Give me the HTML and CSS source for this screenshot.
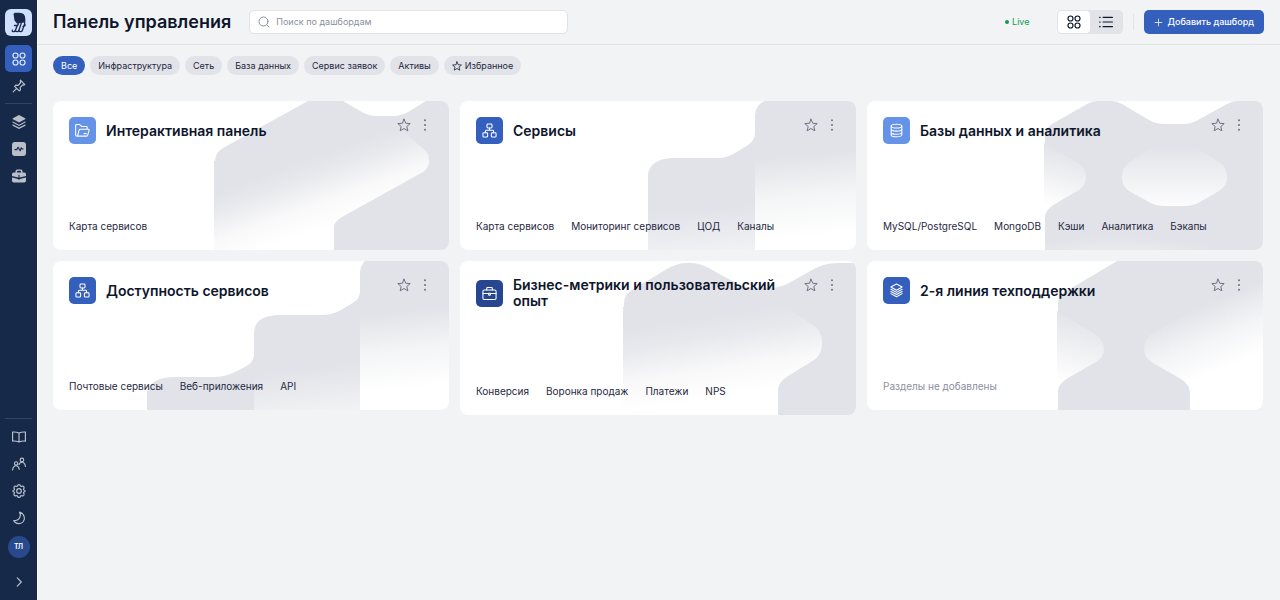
FILE: index.html
```html
<!DOCTYPE html>
<html lang="ru">
<head>
    <meta charset="UTF-8">
    <meta name="viewport" content="width=device-width, initial-scale=1.0">
    <title>Панель управления</title>
    <link rel="stylesheet" href="styles.css">
</head>
<body>
    <svg class="sprite" aria-hidden="true">
        <symbol id="i-grid" viewBox="0 0 24 24"><circle cx="6" cy="6" r="4.300"/><circle cx="18" cy="6" r="4.300"/><circle cx="6" cy="18" r="4.300"/><circle cx="18" cy="18" r="4.300"/></symbol>
        <symbol id="i-star" viewBox="0 0 24 24"><path d="M12 2l3 7 7.600.6-5.800 5 1.800 7.400-6.600-4-6.600 4 1.800-7.400-5.800-5L9 9z"/></symbol>
        <symbol id="i-dots" viewBox="0 0 24 24"><g fill="currentColor" stroke="none"><circle cx="12" cy="4" r="1.700"/><circle cx="12" cy="12" r="1.700"/><circle cx="12" cy="20" r="1.700"/></g></symbol>
        <symbol id="i-tree" viewBox="0 0 24 24"><rect x="8" y="1.500" width="8" height="6.500" rx="1.500"/><rect x="1.500" y="15.500" width="7.500" height="7" rx="1.500"/><rect x="15" y="15.500" width="7.500" height="7" rx="1.500"/><path d="M12 8v3.500M5.500 15.500V13q0-1.500 1.500-1.500h10q1.500 0 1.500 1.500v2.500"/></symbol>
        <symbol id="i-folder" viewBox="0 0 24 24"><path d="M3 21q-2 0-2-2V4q0-1.500 1.500-1.500h5l3 3H18q1.500 0 1.500 1.500v3M3 21q1 0 1.500-2L6.500 11.500q.4-1.500 2-1.500H21.500q1.500 0 1 1.500l-2 7.500q-.5 2-2 2zM14.500 17h3.500"/></symbol>
        <symbol id="i-db" viewBox="0 0 24 24"><ellipse cx="12" cy="5" rx="8.500" ry="3"/><path d="M3.500 5v14c0 4 17 4 17 0V5M3.500 10c0 4 17 4 17 0M3.500 15c0 4 17 4 17 0M7 12v.5M7 17v.5"/></symbol>
        <symbol id="i-case" viewBox="0 0 24 24"><rect x="1.500" y="6.500" width="21" height="15" rx="2"/><path d="M7.500 6.500V4q0-1.500 1.500-1.500h6q1.500 0 1.500 1.500v2.500M1.500 12h9M13.500 12h9M10.500 11.500h3v2.500L12 15l-1.500-1z"/></symbol>
        <symbol id="i-layers" viewBox="0 0 24 24"><path d="M12 1.500l9 5-9 5-9-5zM3 10l9 5 9-5M3 13.500l9 5 9-5M3 17l9 5 9-5"/></symbol>
    </svg>

    <div class="app">
        <aside class="sidebar">
            <a class="logo" href="#" aria-label="Главная">
                <svg viewBox="0 0 27 27">
                    <path fill="#17294d" d="M8.500 5Q9 3.800 10.500 3.800H14.500Q20.300 3.800 20.300 10V13.500H19L12 14.500 9.500 11.500z"/>
                    <path fill="none" stroke="#17294d" stroke-width="1.300" stroke-linecap="round" d="M12.500 13.500q1.500 1.500 0 3H9.500M12.500 16L10.500 21q-.5 1.700-1.900 1.700-1.600 0-1.300-1.500M16 13.500q.5 1-.3 2.500L14 21q-.5 1.700-1.900 1.700-1.300 0-1.300-1M19.500 13.500q.5 1-.3 2.500L17.500 21q-.5 1.700-1.900 1.700-1.300 0-1.300-1M18 17.500q1.500 0 2.300-1.500"/>
                </svg>
            </a>
            <nav class="nav" aria-label="Основное меню">
                <a class="nav-item active" href="#" aria-label="Дашборды"><svg class="icon"><use href="#i-grid"/></svg></a>
                <a class="nav-item" href="#" aria-label="Закреплённые"><svg class="icon" viewBox="0 0 24 24"><path d="M14.500 2l7.500 7.500-2 1-1.500-.5-4.500 4.500.5 4-2 2L4.500 12.500l2-2 4 .5L15 6l-.7-2zM8 16l-6 6"/></svg></a>
                <hr>
                <a class="nav-item solid" href="#" aria-label="Слои"><svg class="icon" viewBox="0 0 24 24"><path d="M12 0l10.500 5.500q1 .8 0 1.600L12 13 1.500 7.100q-1-.8 0-1.600z"/><path d="M1 10.500l11 6 11-6V13L12 19 1 13zM1 16l11 5.500L23 16v2.500L12 24 1 18.500z"/></svg></a>
                <a class="nav-item solid" href="#" aria-label="Мониторинг"><svg class="icon" viewBox="0 0 24 24"><rect width="24" height="24" rx="5"/><path class="cut" d="M5 13h3l2.500-4 3.500 6 2-5 1.500 2H19"/></svg></a>
                <a class="nav-item solid" href="#" aria-label="Сервисы"><svg class="icon" viewBox="0 0 24 24"><path fill-rule="evenodd" d="M6 6V4q0-3 3-3h6q3 0 3 3v2h3q3 0 3 3v3l-9 2H9l-9-2V9q0-3 3-3zM8.500 6h7V4.500Q15.500 3 14 3h-4Q8.500 3 8.500 4.500zM0 14.500l9 2q3 3 6 0l9-2V20q0 3-3 3H3q-3 0-3-3z"/><path class="cut" d="M12 11v2"/></svg></a>
            </nav>
            <nav class="nav nav-bottom" aria-label="Дополнительно">
                <hr>
                <a class="nav-item" href="#" aria-label="Документация"><svg class="icon" viewBox="0 0 24 24"><path d="M12 5q-5-2-11-1.500V19q6-.5 11 1.500 5-2 11-1.500V3.500Q17 3 12 5zv15"/></svg></a>
                <a class="nav-item" href="#" aria-label="Пользователи"><svg class="icon" viewBox="0 0 24 24"><circle cx="7" cy="11" r="2.800"/><path d="M1 22q1-7 6-7 4 0 5.500 6"/><circle cx="17" cy="5" r="3"/><path d="M12 13q1-4 5-4 5 0 6 7"/></svg></a>
                <a class="nav-item" href="#" aria-label="Настройки"><svg class="icon" viewBox="0 0 24 24"><path d="M9.500 3Q10 1 12 1t2.500 2q.5 1.500 2 1 2.500-1 3.800.8 1.200 2-.3 3.500-.8 1 .5 2Q22.500 11 22.500 12t-2 1.800q-1.300 1-.5 2 1.500 1.500.3 3.500-1.300 1.800-3.800.8-1.500-.5-2 1Q14 23 12 23t-2.500-2q-.5-1.500-2-1-2.500 1-3.800-.8-1.200-2 .3-3.500.8-1-.5-2-2-.7-2-1.700t2-1.800q1.300-1 .5-2-1.500-1.500-.3-3.500 1.300-1.800 3.800-.8 1.500.5 2-1z"/><circle cx="12" cy="12" r="4"/></svg></a>
                <a class="nav-item" href="#" aria-label="Тёмная тема"><svg class="icon" viewBox="0 0 24 24"><path d="M13 2c3.500 6 0 14.500-10 14.500 3.500 6.500 12.500 6.500 16.500 1.500C23.500 12 20.500 4 13 2z"/></svg></a>
                <a class="avatar" href="#">ТЛ</a>
                <button class="nav-item" type="button" aria-label="Развернуть меню"><svg class="icon" viewBox="0 0 24 24"><path d="M9 5l7 7-7 7"/></svg></button>
            </nav>
        </aside>

        <div class="page">
            <header class="header">
                <h1>Панель управления</h1>
                <label class="search">
                    <svg class="icon" viewBox="0 0 24 24"><circle cx="11" cy="11" r="9"/><path d="M18 18l4 4"/></svg>
                    <input type="search" placeholder="Поиск по дашбордам" aria-label="Поиск по дашбордам">
                </label>
                <span class="live">Live</span>
                <div class="view">
                    <button class="on" type="button" aria-label="Сетка"><svg class="icon"><use href="#i-grid"/></svg></button>
                    <button type="button" aria-label="Список"><svg class="icon" viewBox="0 0 24 24"><path d="M7 4h16M7 12h16M7 20h16M1 4h1M1 12h1M1 20h1"/></svg></button>
                </div>
                <span class="divider"></span>
                <button class="add" type="button"><svg class="icon" viewBox="0 0 24 24"><path d="M12 3v18M3 12h18"/></svg>Добавить дашборд</button>
            </header>

            <div class="filters">
                <button class="chip active" type="button">Все</button>
                <button class="chip" type="button">Инфраструктура</button>
                <button class="chip" type="button">Сеть</button>
                <button class="chip" type="button">База данных</button>
                <button class="chip" type="button">Сервис заявок</button>
                <button class="chip" type="button">Активы</button>
                <button class="chip" type="button"><svg class="icon"><use href="#i-star"/></svg>Избранное</button>
            </div>

            <main class="cards">
                <article class="card">
                    <svg class="pattern" viewBox="0 0 396 149" preserveAspectRatio="xMaxYMin slice" aria-hidden="true">
                        <linearGradient id="g1" gradientUnits="userSpaceOnUse" x1="222" y1="70" x2="246" y2="136"><stop offset="0" stop-color="#e2e3e8"/><stop offset=".25" stop-color="#e8e9ed"/><stop offset=".65" stop-color="#f9f9fa"/><stop offset="1" stop-color="#fff"/></linearGradient>
                        <path class="shape" d="M255 0L170 47Q162 52 162 60V149H396V0H373L355 11Q348 15 340 15H324Q316 15 309 11L290 0z"/>
                        <path fill="url(#g1)" d="M161 60V150H281V126Q281 121 289 116L370 71Q376 67 376 60 376 50 368 46L345 26 300 30z"/>
                    </svg>
                    <div class="card-head">
                        <span class="tile light"><svg class="icon"><use href="#i-folder"/></svg></span>
                        <h2>Интерактивная панель</h2>
                        <div class="actions">
                            <button type="button" aria-label="В избранное"><svg class="icon"><use href="#i-star"/></svg></button>
                            <button type="button" aria-label="Меню"><svg class="icon"><use href="#i-dots"/></svg></button>
                        </div>
                    </div>
                    <div class="links"><a href="#">Карта сервисов</a></div>
                </article>

                <article class="card">
                    <svg class="pattern" viewBox="0 0 396 149" preserveAspectRatio="xMaxYMin slice" aria-hidden="true">
                        <linearGradient id="g2" gradientUnits="userSpaceOnUse" x1="340" y1="54" x2="348" y2="136"><stop offset="0" stop-color="#e2e3e8"/><stop offset=".5" stop-color="#f4f5f6"/><stop offset="1" stop-color="#fff"/></linearGradient>
                        <linearGradient id="g2b" gradientUnits="userSpaceOnUse" x1="240" y1="108" x2="244" y2="160"><stop offset="0" stop-color="#e2e3e8"/><stop offset="1" stop-color="#f3f4f6"/></linearGradient>
                        <path class="shape" d="M188 149V76C188 62 200 57 215 57H258Q267 57 275 52L288 44Q295 39 295 32V14Q296 3 305 0H396V149z"/>
                        <path fill="url(#g2b)" d="M188 100H295V150H188z"/>
                        <path fill="url(#g2)" d="M295 50H397V150H295z"/>
                    </svg>
                    <div class="card-head">
                        <span class="tile"><svg class="icon"><use href="#i-tree"/></svg></span>
                        <h2>Сервисы</h2>
                        <div class="actions">
                            <button type="button" aria-label="В избранное"><svg class="icon"><use href="#i-star"/></svg></button>
                            <button type="button" aria-label="Меню"><svg class="icon"><use href="#i-dots"/></svg></button>
                        </div>
                    </div>
                    <div class="links"><a href="#">Карта сервисов</a><a href="#">Мониторинг сервисов</a><a href="#">ЦОД</a><a href="#">Каналы</a></div>
                </article>

                <article class="card">
                    <svg class="pattern" viewBox="0 0 396 149" preserveAspectRatio="xMaxYMin slice" aria-hidden="true">
                        <linearGradient id="g3" gradientUnits="userSpaceOnUse" x1="200" y1="48" x2="184" y2="106"><stop offset="0" stop-color="#e2e3e8"/><stop offset="1" stop-color="#fff"/></linearGradient>
                        <linearGradient id="g3b" x1="0" y1="0" x2="0" y2="1"><stop offset="0" stop-color="#e2e3e8"/><stop offset="1" stop-color="#fcfcfd"/></linearGradient>
                        <radialGradient id="g3c" gradientUnits="userSpaceOnUse" cx="0" cy="0" r="1" gradientTransform="translate(250 156) scale(110 20)"><stop offset="0" stop-color="#eeeff2"/><stop offset="1" stop-color="#e2e3e8"/></radialGradient>
                        <path class="shape" d="M178 149V34Q178 28 185 23L220 3Q225 0 230 0H245Q250 0 255 3L282 19Q289 23 297 23H316Q324 23 331 19L360 3Q365 0 370 0H396V149z"/>
                        <path fill="url(#g3c)" d="M178 136H360V149H178z"/>
                        <path fill="url(#g3)" d="M177 42L208 60Q219 66 219 76 219 84 212 89L188 103Q178 109 178 116H177z"/>
                        <path fill="url(#g3b)" d="M255 77Q255 66 263 61L282 49Q290 44 300 44H316Q325 44 333 49L352 61Q360 66 360 77 360 85 352 90L333 101Q326 105 317 105H297Q289 105 282 101L262 90Q255 85 255 77z"/>
                    </svg>
                    <div class="card-head">
                        <span class="tile light"><svg class="icon"><use href="#i-db"/></svg></span>
                        <h2>Базы данных и аналитика</h2>
                        <div class="actions">
                            <button type="button" aria-label="В избранное"><svg class="icon"><use href="#i-star"/></svg></button>
                            <button type="button" aria-label="Меню"><svg class="icon"><use href="#i-dots"/></svg></button>
                        </div>
                    </div>
                    <div class="links"><a href="#">MySQL/PostgreSQL</a><a href="#">MongoDB</a><a href="#">Кэши</a><a href="#">Аналитика</a><a href="#">Бэкапы</a></div>
                </article>

                <article class="card">
                    <svg class="pattern" viewBox="0 0 396 149" preserveAspectRatio="xMaxYMin slice" aria-hidden="true">
                        <linearGradient id="g4" gradientUnits="userSpaceOnUse" x1="350" y1="50" x2="358" y2="128"><stop offset="0" stop-color="#e2e3e8"/><stop offset=".5" stop-color="#f4f5f6"/><stop offset="1" stop-color="#fff"/></linearGradient>
                        <linearGradient id="g4b" gradientUnits="userSpaceOnUse" x1="250" y1="108" x2="256" y2="165"><stop offset="0" stop-color="#e2e3e8"/><stop offset="1" stop-color="#f6f6f8"/></linearGradient>
                        <path class="shape" d="M94 149V131Q98 116 122 116H160Q172 116 182 111L192 106Q201 101 201 94V73C201 60 210 54 228 54H268Q278 54 286 50L298 43Q307 38 307 31V14Q307 4 312 0H396V149z"/>
                        <path fill="url(#g4b)" d="M201 100H307V150H201z"/>
                        <path fill="url(#g4)" d="M307 48H397V150H307z"/>
                    </svg>
                    <div class="card-head">
                        <span class="tile"><svg class="icon"><use href="#i-tree"/></svg></span>
                        <h2>Доступность сервисов</h2>
                        <div class="actions">
                            <button type="button" aria-label="В избранное"><svg class="icon"><use href="#i-star"/></svg></button>
                            <button type="button" aria-label="Меню"><svg class="icon"><use href="#i-dots"/></svg></button>
                        </div>
                    </div>
                    <div class="links"><a href="#">Почтовые сервисы</a><a href="#">Веб-приложения</a><a href="#">API</a></div>
                </article>

                <article class="card">
                    <svg class="pattern" viewBox="0 0 396 154" preserveAspectRatio="xMaxYMin slice" aria-hidden="true">
                        <linearGradient id="g5" gradientUnits="userSpaceOnUse" x1="235" y1="58" x2="248" y2="140"><stop offset="0" stop-color="#e2e3e8"/><stop offset=".25" stop-color="#e8e9ed"/><stop offset=".65" stop-color="#f9f9fa"/><stop offset="1" stop-color="#fff"/></linearGradient>
                        <path class="shape" d="M164 154V42Q164 34 172 29L202 11C221-1 236-1 254 10L276 22Q284 27 294 27H308Q320 27 329 22L352 9Q364 2 378 2H396V154z"/>
                        <path fill="url(#g5)" d="M163 46L300 30 350 62Q362 68 362 82 362 94 354 99L328 115Q318 121 318 130V155H163z"/>
                    </svg>
                    <div class="card-head">
                        <span class="tile dark"><svg class="icon"><use href="#i-case"/></svg></span>
                        <h2>Бизнес-метрики и пользовательский опыт</h2>
                        <div class="actions">
                            <button type="button" aria-label="В избранное"><svg class="icon"><use href="#i-star"/></svg></button>
                            <button type="button" aria-label="Меню"><svg class="icon"><use href="#i-dots"/></svg></button>
                        </div>
                    </div>
                    <div class="links"><a href="#">Конверсия</a><a href="#">Воронка продаж</a><a href="#">Платежи</a><a href="#">NPS</a></div>
                </article>

                <article class="card">
                    <svg class="pattern" viewBox="0 0 396 149" preserveAspectRatio="xMaxYMin slice" aria-hidden="true">
                        <linearGradient id="g6" gradientUnits="userSpaceOnUse" x1="214" y1="54" x2="196" y2="122"><stop offset="0" stop-color="#e2e3e8"/><stop offset="1" stop-color="#fff"/></linearGradient>
                        <linearGradient id="g6b" gradientUnits="userSpaceOnUse" x1="312" y1="54" x2="338" y2="116"><stop offset="0" stop-color="#e2e3e8"/><stop offset=".5" stop-color="#f3f4f6"/><stop offset="1" stop-color="#fff"/></linearGradient>
                        <path class="shape" d="M250 0L198 31Q191 35 191 43V149H396V0z"/>
                        <path fill="url(#g6)" d="M190 50L226 72Q237 78 237 88 237 96 229 101L201 117Q191 123 191 130H190z"/>
                        <path fill="url(#g6b)" d="M277 88Q277 78 286 72L397 10V150H323V132Q323 124 314 118L286 102Q277 97 277 88z"/>
                    </svg>
                    <div class="card-head">
                        <span class="tile"><svg class="icon"><use href="#i-layers"/></svg></span>
                        <h2>2-я линия техподдержки</h2>
                        <div class="actions">
                            <button type="button" aria-label="В избранное"><svg class="icon"><use href="#i-star"/></svg></button>
                            <button type="button" aria-label="Меню"><svg class="icon"><use href="#i-dots"/></svg></button>
                        </div>
                    </div>
                    <p class="empty">Разделы не добавлены</p>
                </article>
            </main>
        </div>
    </div>
</body>
</html>
```
FILE: styles.css
```css
* {
    box-sizing: border-box;
}
body {
    margin: 0;
    font-family: Inter, "Liberation Sans", sans-serif;
    font-size: 10px;
    line-height: 16px;
    color: #0d162b;
    background: #f1f3f5;
}
h1, h2, p {
    margin: 0;
}
a {
    color: inherit;
    text-decoration: none;
}
button {
    font: inherit;
    color: inherit;
    background: none;
    border: none;
    padding: 0;
    cursor: pointer;
}
.sprite {
    display: none;
}
.icon {
    width: 14px;
    height: 14px;
    flex: none;
    fill: none;
    stroke: currentColor;
    stroke-width: 2;
    stroke-linecap: round;
    stroke-linejoin: round;
}
.app {
    display: flex;
    min-height: 100vh;
}

/* sidebar */
.sidebar {
    display: flex;
    flex-direction: column;
    gap: 9px;
    width: 38px;
    height: 100vh;
    padding: 9px 5px 5px;
    position: sticky;
    top: 0;
    background: #172949;
    border-right: 1px solid #fff;
}
.logo {
    width: 27px;
    height: 27px;
    border-radius: 6px;
    background: #cfe0ff;
}
.logo svg {
    display: block;
}
.nav {
    display: flex;
    flex-direction: column;
    align-items: center;
}
.nav-bottom {
    margin-top: auto;
}
.nav hr {
    width: 27px;
    margin: 4px 0;
    border: none;
    border-top: 1px solid #33445f;
}
.nav-item {
    display: flex;
    align-items: center;
    justify-content: center;
    width: 27px;
    height: 27px;
    border-radius: 5px;
    color: #b9c0cd;
}
.nav-item.active {
    background: #355fbd;
    color: #e3ebfb;
}
.solid .icon {
    fill: #b9bec9;
    stroke: none;
}
.solid .cut {
    fill: none;
    stroke: #172949;
    stroke-width: 2;
}
.avatar {
    width: 22px;
    height: 22px;
    margin: 5px 0 10px;
    border-radius: 50%;
    background: #29498f;
    color: #fff;
    font-size: 7px;
    font-weight: 600;
    line-height: 22px;
    text-align: center;
}

/* header */
.page {
    flex: 1;
    min-width: 0;
}
.header {
    display: flex;
    align-items: center;
    height: 45px;
    padding: 0 16px 0 15px;
    border-bottom: 1px solid #e2e4e8;
}
.header h1 {
    font-size: 18px;
    font-weight: 600;
    line-height: 24px;
    white-space: nowrap;
}
.search {
    display: flex;
    align-items: center;
    gap: 6px;
    width: 319px;
    height: 24px;
    margin: 0 auto 0 18px;
    padding: 0 8px;
    background: #fff;
    border: 1px solid #e0e2e7;
    border-radius: 5px;
    color: #8a8f9d;
}
.search .icon {
    width: 12px;
    height: 12px;
}
.search input {
    flex: 1;
    min-width: 0;
    padding: 0;
    border: none;
    outline: none;
    background: none;
    font: inherit;
    font-size: 9px;
}
.search input::placeholder {
    color: #8a8f9d;
}
.live {
    display: flex;
    align-items: center;
    gap: 3px;
    margin-right: 27px;
    font-size: 9px;
    color: #119a54;
}
.live::before {
    content: "";
    width: 4px;
    height: 4px;
    border-radius: 50%;
    background: #119a54;
}
.view {
    display: flex;
    padding: 1px;
    border-radius: 5px;
    background: #e2e3e8;
}
.view button {
    display: flex;
    align-items: center;
    justify-content: center;
    width: 32px;
    height: 22px;
    border-radius: 4px;
}
.view .on {
    background: #fff;
}
.divider {
    width: 1px;
    height: 16px;
    margin: 0 10px;
    background: #e2e3e8;
}
.add {
    display: flex;
    align-items: center;
    gap: 5px;
    height: 24px;
    padding: 0 10px;
    border-radius: 5px;
    background: #355fbd;
    color: #fff;
    font-size: 9px;
    font-weight: 500;
}
.add .icon {
    width: 9px;
    height: 9px;
}

/* filters */
.filters {
    display: flex;
    flex-wrap: wrap;
    gap: 5px;
    padding: 11px 15px 0;
}
.chip {
    display: flex;
    align-items: center;
    gap: 3px;
    height: 19px;
    padding: 0 8px;
    border-radius: 10px;
    background: #e2e3e8;
    color: #1c2740;
    font-size: 9px;
}
.chip.active {
    background: #355fbd;
    color: #fff;
}
.chip .icon {
    width: 10px;
    height: 10px;
}

/* cards */
.cards {
    display: grid;
    grid-template-columns: repeat(3, 1fr);
    align-items: start;
    gap: 11px;
    padding: 26px 17px 26px 15px;
}
.card {
    position: relative;
    padding: 16px;
    border-radius: 8px;
    background: #fff;
    overflow: hidden;
}
.pattern {
    position: absolute;
    top: 0;
    right: 0;
    width: 100%;
    height: 100%;
}
.shape {
    fill: #e2e3e8;
}
.card-head {
    position: relative;
    display: flex;
    align-items: center;
    gap: 10px;
    margin-bottom: 74px;
}
.tile {
    display: flex;
    align-items: center;
    justify-content: center;
    flex: none;
    width: 27px;
    height: 27px;
    border-radius: 5px;
    background: #355fbd;
    color: #fff;
}
.tile .icon {
    width: 15px;
    height: 15px;
    stroke-width: 1.7;
}
.tile.light {
    background: #6493e8;
}
.tile.dark {
    background: #26468f;
}
.card h2 {
    flex: 1;
    font-size: 14px;
    font-weight: 600;
    line-height: 16px;
}
.actions {
    display: flex;
    gap: 6px;
    align-self: flex-start;
    padding-right: 1px;
    color: #6b7183;
}
.actions .icon {
    stroke-width: 1.7;
}
.actions button {
    display: flex;
    align-items: center;
    justify-content: center;
    width: 15px;
    height: 16px;
}
.links {
    position: relative;
    display: flex;
    flex-wrap: wrap;
    gap: 0 17px;
    color: #1f2942;
}
.empty {
    position: relative;
    color: #8a8f9d;
}
```
